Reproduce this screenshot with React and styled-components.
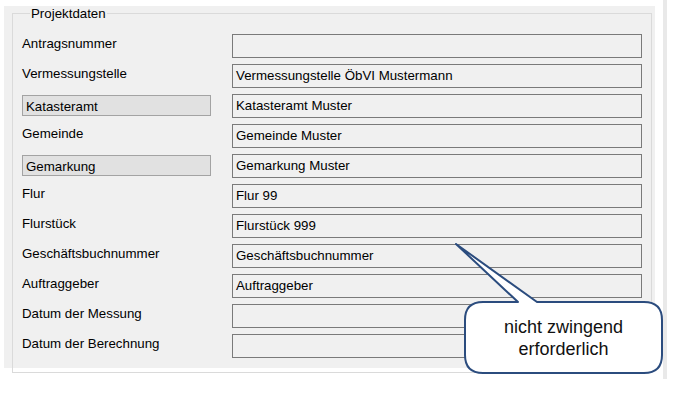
import React from 'react';
import styled, { createGlobalStyle } from 'styled-components';

const GlobalStyle = createGlobalStyle`
  body {
    margin: 0;
    background: #ffffff;
    font-family: "Liberation Sans", Arial, sans-serif;
  }
`;

const Page = styled.div`
  position: relative;
  width: 683px;
  height: 396px;
  display: flex;
  align-items: flex-start;
  padding-left: 4px;
  box-sizing: border-box;
`;

const Panel = styled.div`
  margin-top: 6px;
  width: 651px;
  height: 362px;
  background: #f0f0f0;
  padding: 0 3px 0 8px;
  box-sizing: border-box;
`;

const Divider = styled.div`
  margin-left: 8px;
  width: 4px;
  height: 379px;
  background: #e9e9e9;
`;

const GroupBox = styled.fieldset`
  margin: 0;
  width: 640px;
  height: 367px;
  min-width: 0;
  box-sizing: border-box;
  border: 1px solid #dadada;
  padding: 13px 9px 0 9px;
  display: flex;
  flex-direction: column;
  gap: 6px;
`;

const Legend = styled.legend`
  margin-left: 8px;
  padding: 0 1px;
  font-size: 13.3px;
  line-height: 15px;
  color: #000;
`;

const Row = styled.div`
  display: grid;
  grid-template-columns: 189px 410px;
  column-gap: 21px;
  align-items: start;
`;

const Label = styled.div`
  font-size: 13.3px;
  line-height: 15px;
  color: #000;
  padding-top: ${(p) => (p.boxed ? '3px' : '2px')};
  padding-left: ${(p) => (p.boxed ? '3px' : '0')};
  margin-top: ${(p) => (p.boxed ? '1px' : '0')};
  height: ${(p) => (p.boxed ? '21px' : 'auto')};
  box-sizing: border-box;
  background: ${(p) => (p.boxed ? '#e1e1e1' : 'transparent')};
  border: ${(p) => (p.boxed ? '1px solid #a3a3a3' : 'none')};
`;

const Field = styled.div`
  height: 24px;
  box-sizing: border-box;
  border: 1px solid #7a7a7a;
  background: #f0f0f0;
  padding-left: 3px;
  font-size: 13.3px;
  line-height: 22px;
  color: #000;
  white-space: nowrap;
  overflow: hidden;
`;

const Callout = styled.div`
  position: absolute;
  left: 450px;
  top: 238px;
  width: 220px;
  height: 142px;
`;

const CalloutText = styled.div`
  position: absolute;
  left: 15px;
  top: 64px;
  width: 197px;
  height: 71px;
  display: flex;
  flex-direction: column;
  align-items: center;
  justify-content: center;
  font-size: 18px;
  line-height: 22px;
  color: #111;
`;

const rows = [
  { label: 'Antragsnummer', value: '' },
  { label: 'Vermessungstelle', value: 'Vermessungstelle ÖbVI Mustermann' },
  { label: 'Katasteramt', value: 'Katasteramt Muster', boxed: true },
  { label: 'Gemeinde', value: 'Gemeinde Muster' },
  { label: 'Gemarkung', value: 'Gemarkung Muster', boxed: true },
  { label: 'Flur', value: 'Flur 99' },
  { label: 'Flurstück', value: 'Flurstück 999' },
  { label: 'Geschäftsbuchnummer', value: 'Geschäftsbuchnummer' },
  { label: 'Auftraggeber', value: 'Auftraggeber' },
  { label: 'Datum der Messung', value: '' },
  { label: 'Datum der Berechnung', value: '' },
];

export default function App() {
  return (
    <Page>
      <GlobalStyle />
      <Panel>
        <GroupBox>
          <Legend>Projektdaten</Legend>
          {rows.map((r) => (
            <Row key={r.label}>
              <Label boxed={r.boxed}>{r.label}</Label>
              <Field>{r.value}</Field>
            </Row>
          ))}
        </GroupBox>
      </Panel>
      <Divider />
      <Callout>
        <svg width="220" height="142" viewBox="0 0 220 142">
          <path
            d="M33 64 L68 64 L6 6 L87 64 L194 64 Q212 64 212 82 L212 117 Q212 135 194 135 L33 135 Q15 135 15 117 L15 82 Q15 64 33 64 Z"
            fill="#ffffff"
            stroke="#2b4c7e"
            strokeWidth="2"
            strokeLinejoin="round"
          />
        </svg>
        <CalloutText>
          <span>nicht zwingend</span>
          <span>erforderlich</span>
        </CalloutText>
      </Callout>
    </Page>
  );
}
